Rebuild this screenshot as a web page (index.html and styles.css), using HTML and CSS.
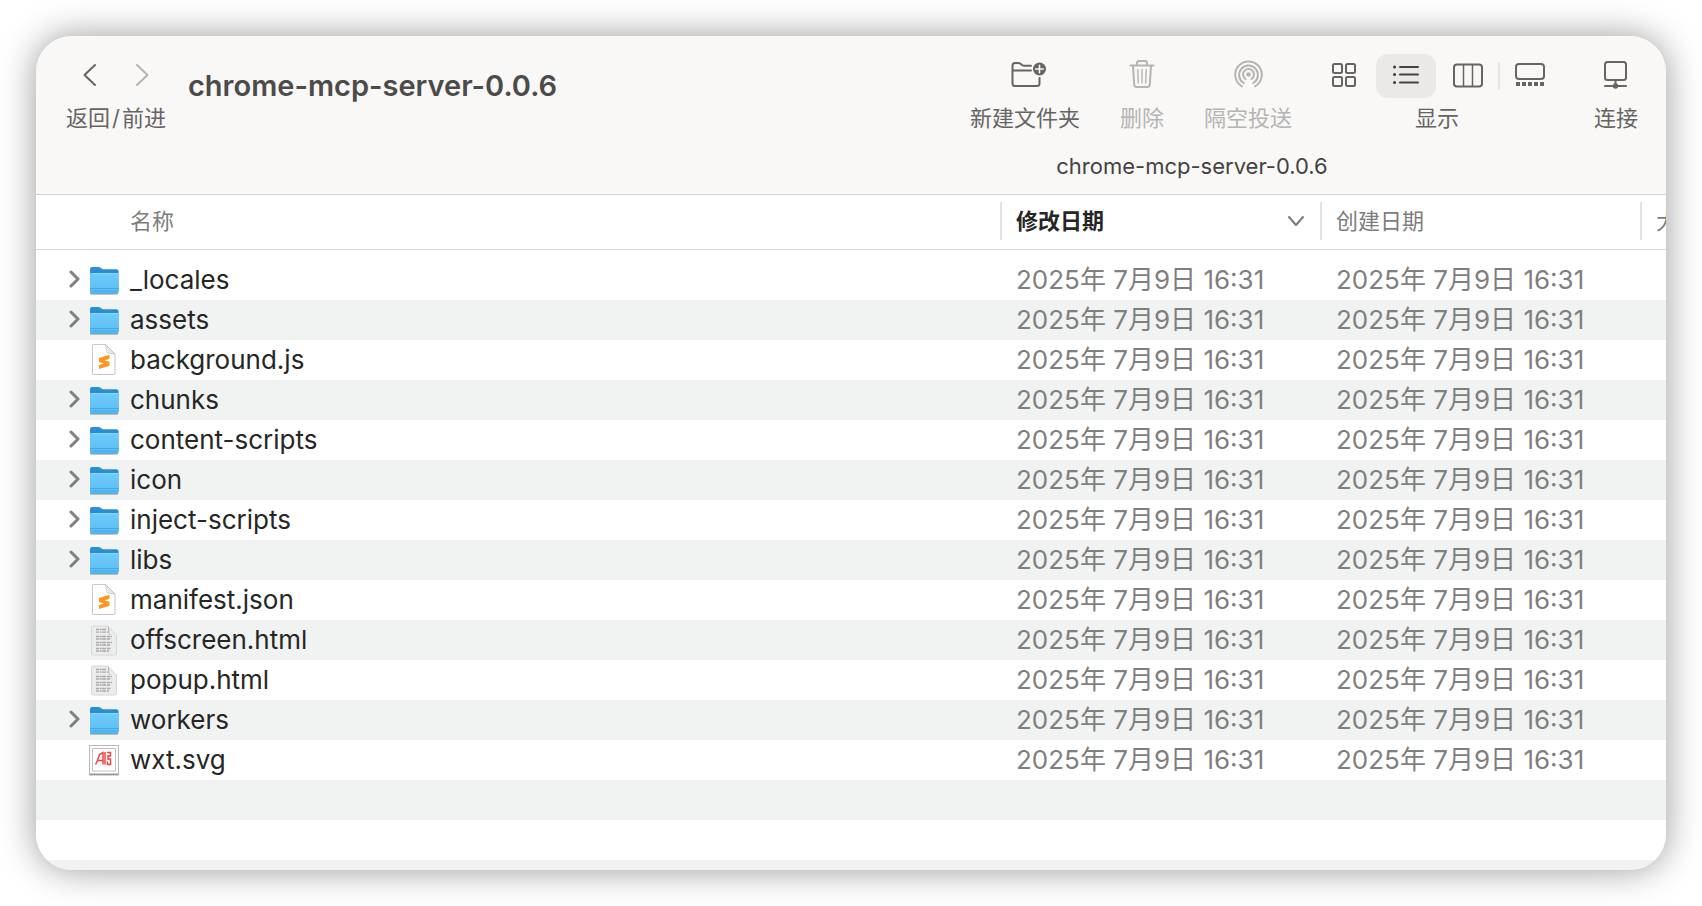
FILE: index.html
```html
<!DOCTYPE html>
<html lang="zh-CN">
<head>
  <meta charset="UTF-8">
  <title>chrome-mcp-server-0.0.6</title>
  <meta name="viewport" content="width=device-width, initial-scale=1.0">
  <link rel="stylesheet" href="styles.css">
</head>
<body>
  <svg class="sprite" aria-hidden="true">
    <defs>
      <linearGradient id="folderFront" x1="0" y1="0" x2="0" y2="1">
        <stop offset="0" stop-color="#72cbfb"/>
        <stop offset="1" stop-color="#57bdf6"/>
      </linearGradient>
      <linearGradient id="folderBack" x1="0" y1="0" x2="0" y2="1">
        <stop offset="0" stop-color="#2c93d3"/>
        <stop offset="1" stop-color="#0f7cc4"/>
      </linearGradient>
      <linearGradient id="foldShade" x1="0" y1="1" x2="1" y2="0">
        <stop offset="0" stop-color="#fff"/>
        <stop offset="1" stop-color="#c4c4c4"/>
      </linearGradient>
    </defs>
    <symbol id="icon-folder" viewBox="0 0 32 40">
      <rect x="2" y="32" width="28" height="3" rx="1" fill="#000" opacity=".22"/>
      <path d="M2 9q0-2 2-2h6.500q1.500 0 2.500 1l1 .8q.6.500 1.500.500H28.500q2 0 2 2V31H2z" fill="url(#folderBack)"/>
      <rect x="2" y="13" width="28.500" height="20.500" rx="1.500" fill="url(#folderFront)"/>
      <path d="M2.500 13.500h27.500" stroke="#8dd8ff"/>
      <path d="M2 28.500h28.500M2 31h28.500" stroke="#3aa3e0" stroke-width=".8"/>
      <path d="M2.500 33.300h27.500" stroke="#3f9fd6" stroke-width=".8"/>
    </symbol>
    <symbol id="icon-code" viewBox="0 0 32 40">
      <path d="M5.500 4.500h12.500l9 9v19.500q0 2-2 2H6.500q-1.500 0-1.500-1.500V5z" fill="#000" opacity=".1"/>
      <path d="M4.500 5.500q0-1 1-1h12l9.500 9.500v19q0 1.500-1.500 1.500h-20q-1 0-1-1z" fill="#fff" stroke="#c6c6c6"/>
      <path d="M17.500 4.500l1 7q.2 1.500 1.700 1.500l6.800 1z" fill="url(#foldShade)" stroke="#c0c0c0" stroke-width=".7"/>
      <path d="M11 18l10.500-3.200v4l-5 1.700 5 1.300v4l-10.500 3.200v-4l5-1.600-5-1.400z" fill="#ff9420"/>
    </symbol>
    <symbol id="icon-text" viewBox="0 0 32 40">
      <path d="M3.500 7.500q0-1.500 1.500-1.500h14.500l9 9v18q0 2-2 2H5.500q-2 0-2-2z" fill="#ececec" stroke="#d6d6d6"/>
      <path d="M8 9.500h10M8 12.200h12M8 16.500h16M8 19h15M8 22.500h16M8 25h15M8 28.500h15M8 31h13" stroke="#a8a8a8" stroke-width="1.300" stroke-dasharray="3 .7 2 .5 4 .8"/>
      <path d="M20 6l1 7q.2 1.500 1.500 1.500l6 .5z" fill="url(#foldShade)"/>
      <path d="M20.300 7l.7 6q.2 1.500 1.500 1.500" stroke="#9a9a9a" fill="none" stroke-width=".7"/>
    </symbol>
    <symbol id="icon-image" viewBox="0 0 32 40">
      <rect x="1" y="6" width="30" height="30" rx="1" fill="#000" opacity=".16"/>
      <rect x="1.500" y="5.500" width="29" height="28.500" fill="#fff" stroke="#b8b8b8"/>
      <path d="M1.500 34.300h29" stroke="#8d8d8d"/>
      <rect x="4.500" y="8.500" width="23" height="22.500" fill="#fff" stroke="#c3c3c3"/>
      <path d="M7.500 24.500l2-4 2-6 3.500-2v12M9.500 20.500h5M17 12v12.500M19 12.500h3.500v3.500h-3M19.500 19h3v5.500h-3v-3M20 15v5" fill="none" stroke="#ef4444" stroke-width="1.500"/>
    </symbol>
  </svg>

  <main class="window">
    <header class="toolbar">
      <div class="toolbar-row">
        <div class="tool nav">
          <div class="tool-icons">
            <button aria-label="返回"><svg width="32" height="44" viewBox="0 0 32 44"><path d="M21 11L10.500 21 21 31"/></svg></button>
            <button aria-label="前进" disabled><svg width="32" height="44" viewBox="0 0 32 44"><path d="M11 11L21.500 21 11 31"/></svg></button>
          </div>
          <span class="tool-label">返回<span class="slash">/</span>前进</span>
        </div>
        <h1>chrome-mcp-server-0.0.6</h1>
        <div class="actions">
          <button class="tool">
            <svg width="44" height="44" viewBox="-7 0 44 44">
              <path d="M29.500 24v5.500q0 2.500-2.500 2.500H5q-2.500 0-2.500-2.500V11.500Q2.500 9 5 9h3q1.500 0 2.500.8l1.500 1.200q1 .8 2.300.8H21M2.500 16.500H21"/>
              <circle cx="29.500" cy="15" r="6.500" fill="currentColor" stroke="none"/>
              <path d="M29.500 11.200v7.600M25.700 15h7.600" stroke="#f9f8f6" stroke-width="1.600"/>
            </svg>
            <span class="tool-label">新建文件夹</span>
          </button>
          <button class="tool" disabled>
            <svg width="44" height="44" viewBox="0 0 44 44">
              <path d="M10.500 11.500h23M17 11V9q0-2 2-2h6q2 0 2 2v2M13 12l1.200 18.500q.2 2.500 2.500 2.500h10.600q2.300 0 2.500-2.500L31 12"/>
              <path d="M17.800 15.500l.5 13.500M22 15.500v13.500M26.200 15.500l-.5 13.500" stroke-width="1.400"/>
            </svg>
            <span class="tool-label">删除</span>
          </button>
          <button class="tool" disabled>
            <svg width="44" height="44" viewBox="0 0 44 44" stroke-width="1.600">
              <circle cx="22.500" cy="20.500" r="2.300" fill="currentColor" stroke="none"/>
              <path d="M19.500 25a5.400 5.400 0 1 1 6 0"/>
              <path d="M17.800 29a9.400 9.400 0 1 1 9.400 0"/>
              <path d="M16 32.300a13.300 13.300 0 1 1 13 0"/>
            </svg>
            <span class="tool-label">隔空投送</span>
          </button>
        </div>
        <div class="tool views">
          <div class="tool-icons">
            <button aria-label="图标">
              <svg width="60" height="44" viewBox="0 0 60 44"><rect x="19" y="10" width="9" height="9" rx="1.500"/><rect x="32" y="10" width="9" height="9" rx="1.500"/><rect x="19" y="23" width="9" height="9" rx="1.500"/><rect x="32" y="23" width="9" height="9" rx="1.500"/></svg>
            </button>
            <button class="active" aria-label="列表">
              <svg width="60" height="44" viewBox="0 0 60 44"><path d="M24 13h18M24 20.500h18M24 28.500h18"/><path d="M18.500 13h.1M18.500 20.500h.1M18.500 28.500h.1" stroke-width="3"/></svg>
            </button>
            <button aria-label="分栏">
              <svg width="60" height="44" viewBox="0 0 60 44"><rect x="16" y="10.500" width="28" height="22" rx="3"/><path d="M25.500 11v21M34.500 11v21" stroke-width="1.500"/></svg>
            </button>
            <button class="gallery" aria-label="画廊">
              <svg width="60" height="44" viewBox="0 0 60 44"><rect x="16" y="10" width="28" height="15" rx="3"/><path d="M16 30h28" stroke-width="4" stroke-dasharray="4 2" stroke-linecap="butt"/></svg>
            </button>
          </div>
          <span class="tool-label">显示</span>
        </div>
        <button class="tool connect">
          <svg width="44" height="44" viewBox="0 0 44 44">
            <rect x="11" y="8" width="21" height="18" rx="2.500"/>
            <path d="M21.500 26v5M11 32h21"/>
            <circle cx="21.500" cy="32" r="2.700" fill="currentColor" stroke="none"/>
          </svg>
          <span class="tool-label">连接</span>
        </button>
      </div>
      <div class="tab-title">chrome-mcp-server-0.0.6</div>
    </header>

    <table class="files">
      <colgroup>
        <col><col class="col-date"><col class="col-date"><col class="col-size">
      </colgroup>
      <thead>
        <tr>
          <th>名称</th>
          <th class="sorted" aria-sort="descending"><div class="th-inner">修改日期 <svg width="16" height="12" viewBox="0 0 16 12"><path d="M1 2l7 8 7-8"/></svg></div></th>
          <th><div class="th-inner">创建日期</div></th>
          <th><div class="th-inner">大小</div></th>
        </tr>
      </thead>
      <tbody id="fileList"></tbody>
    </table>
    <div class="empty-rows"></div>
  </main>

  <script>
    const files = [
      { name: '_locales', type: 'folder' },
      { name: 'assets', type: 'folder' },
      { name: 'background.js', type: 'code' },
      { name: 'chunks', type: 'folder' },
      { name: 'content-scripts', type: 'folder' },
      { name: 'icon', type: 'folder' },
      { name: 'inject-scripts', type: 'folder' },
      { name: 'libs', type: 'folder' },
      { name: 'manifest.json', type: 'code' },
      { name: 'offscreen.html', type: 'text' },
      { name: 'popup.html', type: 'text' },
      { name: 'workers', type: 'folder' },
      { name: 'wxt.svg', type: 'image' },
    ];
    const date = '2025年 7月9日 16:31';

    // Render rows
    const list = document.getElementById('fileList');
    files.forEach((file) => {
      const row = document.createElement('tr');
      const toggle = file.type === 'folder'
        ? `<button class="toggle" aria-label="展开 ${file.name}"><svg width="12" height="18" viewBox="0 0 12 18"><path d="M2 2l7 7-7 7"/></svg></button>`
        : '<span class="toggle"></span>';
      row.innerHTML = `
  <td><div class="name">${toggle}<svg class="file-icon"><use href="#icon-${file.type}"/></svg><span>${file.name}</span></div></td>
  <td class="date">${date}</td>
  <td class="date">${date}</td>
  <td></td>
`;
      list.appendChild(row);
    });
  </script>
</body>
</html>
```
FILE: styles.css
```css
* { box-sizing:border-box; }
body {
  margin:0; padding:36px; min-height:100vh; display:flex; background:#fff; color:#262626;
  font-family:Inter,"Noto Sans CJK SC",sans-serif;
}
button {
  background:none; border:none; padding:0; margin:0; font:inherit; color:inherit; cursor:pointer;
}
button:disabled { color:#b5b4b3; cursor:default; }
svg { display:block; }
.sprite { position:absolute; width:0; height:0; }

.window {
  flex:1; min-width:0; display:flex; flex-direction:column; overflow:hidden;
  background:#fff; border-radius:36px;
  box-shadow:0 0 36px rgba(0,0,0,0.4);
}

/* Toolbar */
.toolbar {
  background:#f9f8f6; border-bottom:1px solid #d2d1d0; color:#666564;
  padding:18px 28px 12px 30px;
}
.toolbar svg {
  fill:none; stroke:currentColor; stroke-width:2; stroke-linecap:round; stroke-linejoin:round;
}
.toolbar-row { display:flex; align-items:flex-start; }
.tool { display:flex; flex-direction:column; align-items:center; gap:8px; }
.tool-icons { display:flex; gap:2px; }
.tool-label { font-size:22px; line-height:24px; white-space:nowrap; }
.nav .tool-icons { gap:20px; }
.slash { margin:0 2px; }
.toolbar h1 {
  margin:14px auto 0 22px; font-size:29px; line-height:36px; font-weight:600; color:#4c4b4a;
  white-space:nowrap;
}
.actions { display:flex; gap:40px; }
.views { margin:0 34px 0 22px; }
.views button { border-radius:12px; }
.views .active { background:#eae9e8; color:#434241; }
.views .gallery { position:relative; }
.views .gallery::before {
  content:""; position:absolute; left:-2px; top:8px; width:2px; height:28px; background:#e6e5e4;
}
.tab-title {
  margin-top:20px; padding-left:680px; text-align:center; font-size:22px; line-height:32px; color:#434241;
}

/* File list */
.files { width:100%; table-layout:fixed; border-collapse:collapse; }
.col-date { width:320px; }
.col-size { width:26px; }
.files th {
  height:54px; padding:0 0 2px; text-align:left; font-size:22px; line-height:38px; font-weight:400; color:#7d7d7d;
  border-bottom:1px solid #d9d9d9; white-space:nowrap; overflow:hidden;
}
.files th:first-child { padding-left:94px; }
.files th.sorted { font-weight:700; color:#262626; }
.th-inner {
  display:flex; align-items:center; justify-content:space-between;
  border-left:2px solid #e3e3e3; padding:0 16px 0 14px;
}
.th-inner svg { fill:none; stroke:#7d7d7d; stroke-width:2; stroke-linecap:round; stroke-linejoin:round; }
.files tbody::before { content:""; display:block; height:10px; }
.files td { height:40px; padding:0; font-size:26px; line-height:40px; white-space:nowrap; }
.files tbody tr:nth-child(even) { background:#f1f3f2; }
.name { display:flex; align-items:center; padding-left:26px; }
.toggle { width:26px; height:40px; padding-bottom:2px; display:flex; align-items:center; justify-content:center; }
.toggle svg { fill:none; stroke:#7f7f7f; stroke-width:3; stroke-linecap:round; stroke-linejoin:round; }
.file-icon { width:32px; height:40px; margin-right:10px; }
.files .date { padding-left:16px; color:#7f7f7f; }
.empty-rows {
  flex:1; background:repeating-linear-gradient(#f1f3f2 0 40px, #fff 40px 80px);
}
```
